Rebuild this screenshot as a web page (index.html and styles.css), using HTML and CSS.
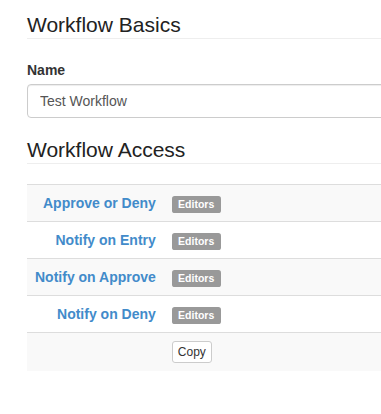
FILE: index.html
```html
<!DOCTYPE html>
<html>
<head>
  <link rel="stylesheet" href="styles.css">
</head>
<body>
  <div class="page">
    <h3 class="page-header first">Workflow Basics</h3>

    <div class="form-group">
      <label class="control-label" for="workflowName">Name</label>
      <input id="workflowName" class="form-control" type="text" value="Test Workflow" />
    </div>

    <h3 class="page-header">Workflow Access</h3>

    <table class="access-table">
      <tbody>
        <tr>
          <td class="perm"><a href="#">Approve or Deny</a></td>
          <td class="groups"><span class="label">Editors</span></td>
        </tr>
        <tr>
          <td class="perm"><a href="#">Notify on Entry</a></td>
          <td class="groups"><span class="label">Editors</span></td>
        </tr>
        <tr>
          <td class="perm"><a href="#">Notify on Approve</a></td>
          <td class="groups"><span class="label">Editors</span></td>
        </tr>
        <tr>
          <td class="perm"><a href="#">Notify on Deny</a></td>
          <td class="groups"><span class="label">Editors</span></td>
        </tr>
        <tr>
          <td class="perm"></td>
          <td class="groups"><button class="btn-xs">Copy</button></td>
        </tr>
      </tbody>
    </table>
  </div>
</body>
</html>
```

FILE: styles.css
```css
html, body {
  overflow: hidden;
}

body {
  margin: 0;
  font-family: "Liberation Sans", Arial, sans-serif;
  font-size: 14px;
  line-height: 20px;
  color: #333;
  background: #fff;
}

.page {
  width: 380px;
  padding-left: 27px;
}

.page-header {
  margin: 20px 0 20px 0;
  padding-bottom: 2px;
  font-size: 21px;
  font-weight: normal;
  line-height: 23px;
  color: #222;
  border-bottom: 1px solid #eee;
}

.page-header.first {
  margin-top: 13px;
}

.form-group label {
  display: block;
  margin-top: 21px;
  margin-bottom: 4px;
  font-weight: bold;
}

.form-control {
  box-sizing: border-box;
  display: block;
  width: 100%;
  height: 34px;
  padding: 0 12px;
  font-family: inherit;
  font-size: 14px;
  color: #555;
  border: 1px solid #ccc;
  border-radius: 4px;
  box-shadow: inset 0 1px 1px rgba(0,0,0,0.075);
}

.access-table {
  width: 100%;
  border-collapse: collapse;
  border-spacing: 0;
}

.access-table td {
  padding: 8px;
  border-top: 1px solid #ddd;
  vertical-align: top;
}

/* Striped rows */
.access-table tr:nth-child(odd) td {
  background-color: #f9f9f9;
}

.access-table td.perm {
  text-align: right;
  white-space: nowrap;
}

.access-table td.groups {
  width: 100%;
}

.perm a {
  color: #428bca;
  font-weight: bold;
  text-decoration: none;
}

.label {
  display: inline;
  padding: 0.2em 0.6em 0.3em;
  font-size: 75%;
  font-weight: bold;
  line-height: 1;
  color: #fff;
  background-color: #999;
  border-radius: 0.25em;
}

.btn-xs {
  padding: 1px 5px;
  font-family: inherit;
  font-size: 12px;
  line-height: 1.5;
  color: #333;
  background: #fff;
  border: 1px solid #ccc;
  border-radius: 3px;
  cursor: pointer;
}
```
